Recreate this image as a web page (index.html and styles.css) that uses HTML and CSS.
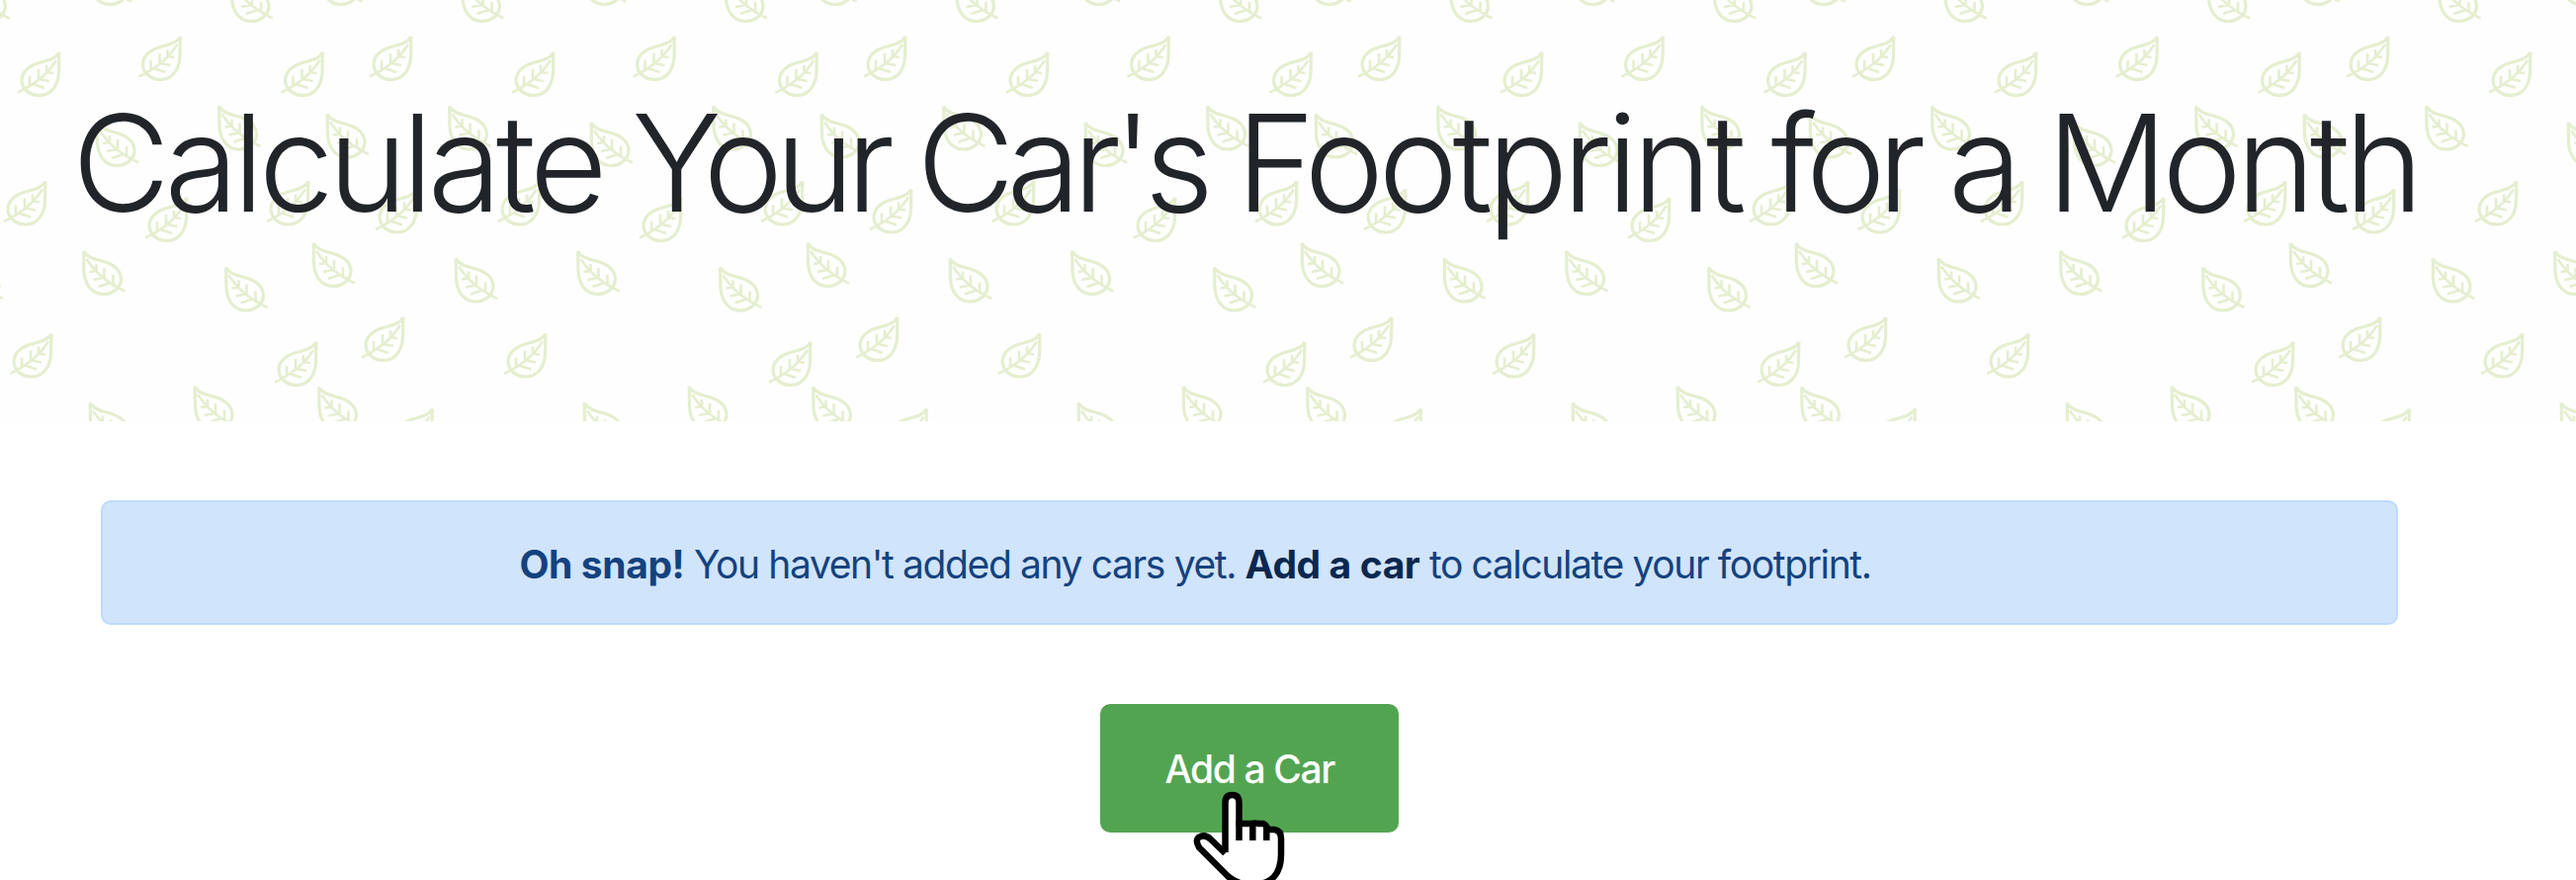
FILE: index.html
```html
<!DOCTYPE html>
<html lang="en">
<head>
<meta charset="utf-8">
<title>Car Footprint</title>
<link rel="stylesheet" href="styles.css">
</head>
<body>
<header class="hero">
  <svg class="hero-leaves" aria-hidden="true">
    <defs>
      <g id="a" class="leaf">
        <path d="M0 0C-4 7-13 8.500-22 11C-31 14-38 20-38 29C-37 38-29 43.500-20 43.500C-10 43.500-3 36-1 25C0.500 15-1 8 0 0Z"/>
        <path class="vein" d="M-42 40.500C-36 37.500-31 35-27 32C-19 27-9 17-3 8M-30 24V34M-21 17V28M-13 13V21M-27 32L-15 36M-20 27L-10 29M-13 20L-6 21"/>
      </g>
      <g id="b"><use href="#a" transform="scale(-1 1)"/></g>
      <pattern id="leaves" width="500" height="430" patternUnits="userSpaceOnUse">
        <g id="tile">
          <use href="#a" x="60" y="53"/><use href="#a" x="182.500" y="37"/><use href="#a" x="326.500" y="53"/><use href="#a" x="416" y="37"/>
          <use href="#a" x="46" y="183.500"/><use href="#a" x="189" y="200"/><use href="#a" x="312" y="183.500"/><use href="#a" x="422" y="191.500"/>
          <use href="#a" x="52" y="337.500"/><use href="#a" x="320" y="346"/><use href="#a" x="408" y="321"/><use href="#a" x="437.500" y="413.500"/>
          <use href="#b" x="221.500" y="107.500"/><use href="#b" x="331" y="115.500"/><use href="#b" x="454.500" y="107.500"/><use href="#b" x="98" y="124"/>
          <use href="#b" x="84.500" y="254"/><use href="#b" x="228.500" y="270.500"/><use href="#b" x="317" y="246"/><use href="#b" x="461" y="261.500"/><use href="#b" x="-39" y="261.500"/>
          <use href="#b" x="197" y="391"/><use href="#b" x="322.500" y="391.500"/><use href="#b" x="91" y="407.500"/>
          <use href="#b" x="234" y="-22"/><use href="#b" x="467.500" y="-22"/><use href="#b" x="-32.500" y="-22"/><use href="#b" x="91" y="-39"/><use href="#b" x="324.500" y="-39"/>
        </g>
      </pattern>
    </defs>
    <rect width="100%" height="100%" fill="url(#leaves)"/>
  </svg>
  <h1 class="hero-title">Calculate <span class="tight">Your</span> <span class="tight">Car's</span> Footprint <span class="tight">for</span> a Month</h1>
</header>
<main class="content">
  <div class="alert"><p class="alert-text"><strong>Oh snap!</strong> You haven't added any cars yet. <a class="alert-link">Add a car</a> to calculate your footprint.</p></div>
  <button class="btn"><span class="btn-label">Add a Car</span>
    <svg class="pointer" viewBox="0 0 100 110" aria-hidden="true">
      <path d="M34.500 72V22Q34.500 14 41.500 14Q48.500 14 48.500 22V43H61Q65 42 68 43H73Q76 44 78 49H84Q91 50 91 58V74C91 95 80 104 66 104H54Q45 103 37 96L8 67Q4 60 7.500 57Q14 53 20 59L34.500 73"/>
      <path d="M48.500 40V60M62.300 43V60M76.300 46V60"/>
    </svg>
  </button>
</main>
</body>
</html>
```
FILE: styles.css
```css
* { box-sizing: border-box; }
body {
  margin: 0;
  height: 890px;
  overflow: hidden;
  background: #fff;
  color: #212529;
  font-family: Inter, "Liberation Sans", sans-serif;
}
.hero {
  position: relative;
  height: 426px;
  padding: 83px 0 0 73px;
  background: #fefefe;
}
.hero-leaves {
  position: absolute;
  inset: 0;
  width: 100%;
  height: 100%;
  fill: none;
  filter: blur(0.7px);
  clip-path: inset(0);
}
.leaf {
  stroke: #e5eecf;
  stroke-width: 3.2;
}
.vein { stroke-width: 2.6; }
.hero-title {
  position: relative;
  margin: 0;
  font-size: 136px;
  font-weight: 340;
  line-height: 164px;
  letter-spacing: -5.600px;
  word-spacing: -2.200px;
  white-space: nowrap;
}
.tight { letter-spacing: -8px; }
.content {
  width: 2324px;
  margin: 80px 0 0 102px;
  display: flex;
  flex-direction: column;
  align-items: center;
  gap: 80px;
}
.alert {
  width: 100%;
  height: 126px;
  padding: 2px 110px 0 0;
  display: flex;
  align-items: center;
  justify-content: center;
  border: 2px solid #bedaff;
  border-radius: 10px;
  background: #d0e4fc;
  color: #14427f;
  font-size: 39px;
  font-weight: 430;
}
.alert-text { margin: 0; white-space: nowrap; letter-spacing: -1.380px; }
.alert strong, .alert-link { font-weight: 700; letter-spacing: -0.400px; }
.alert-link { color: #0a274f; }
.btn {
  position: relative;
  width: 302px;
  height: 130px;
  padding: 0;
  border: 0;
  border-radius: 10px;
  background: #53a451;
  color: #fff;
  font: 450 39px Inter, "Liberation Sans", sans-serif;
}
.btn-label { letter-spacing: -1.400px; }
.pointer {
  position: absolute;
  left: 92px;
  top: 78px;
  width: 100px;
  height: 110px;
  fill: #fff;
  stroke: #000;
  stroke-width: 6.500;
  filter: blur(0.5px);
}
```
